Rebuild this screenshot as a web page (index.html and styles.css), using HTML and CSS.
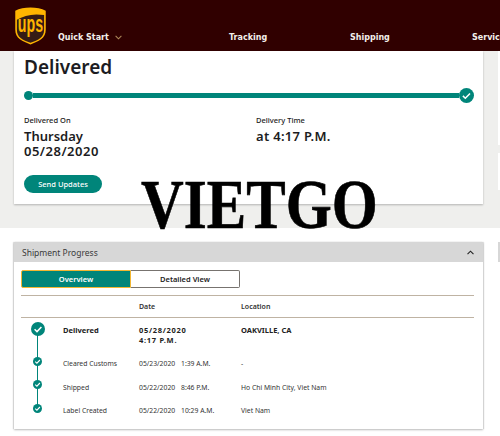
FILE: index.html
```html
<!DOCTYPE html>
<html lang="en">
<head>
    <meta charset="UTF-8">
    <meta name="viewport" content="width=device-width, initial-scale=1.0">
    <title>UPS Tracking</title>
    <link rel="stylesheet" href="styles.css">
</head>
<body>
    <header class="topbar">
        <svg class="logo" viewBox="0 0 34 40" width="33" height="38" preserveAspectRatio="none" aria-label="UPS">
            <path d="M17 .6C11 .6 5.6 1.700 1.300 4v20c0 4.300 1.700 7.600 4.800 10 2.900 2.300 7 3.900 10.900 5.400 3.900-1.500 8-3.100 10.900-5.400 3.100-2.400 4.800-5.700 4.800-10V4C28.400 1.700 23 .6 17 .6z" fill="#ffb500"/>
            <path d="M31 8.500V24.200c0 3.600-1.300 6.400-3.800 8.500-2.600 2.200-6.400 3.700-10.200 5-3.800-1.300-7.600-2.800-10.200-5C4.300 30.600 3 27.800 3 24.200V13.500C10 8.800 20 6.500 31 8.500z" fill="#351c15"/>
            <text class="logo-text" x="4" y="26" textLength="26" lengthAdjust="spacingAndGlyphs">ups</text>
        </svg>
        <nav class="nav">
            <a class="nav-item quick">Quick Start
                <svg class="chevron" viewBox="0 0 8 5" width="7" height="5"><path d="M.7.7 4 4 7.300.7" fill="none" stroke="#b08a5a" stroke-width="1.200"/></svg>
            </a>
            <a class="nav-item tracking">Tracking</a>
            <a class="nav-item shipping">Shipping</a>
            <a class="nav-item">Services</a>
        </nav>
    </header>

    <section class="top-area">
        <div class="status-card">
            <h1 class="status-title">Delivered</h1>
            <div class="track">
                <span class="track-dot"></span>
                <span class="track-line"></span>
                <svg class="track-check" viewBox="0 0 15 15" width="15" height="15">
                    <circle cx="7.500" cy="7.500" r="7.500" fill="#00857a"/>
                    <path d="M3.900 7.900 6.300 10.200 11 5.400" fill="none" stroke="#fff" stroke-width="1.500"/>
                </svg>
            </div>
            <div class="details">
                <div class="detail-col">
                    <div class="detail-label">Delivered On</div>
                    <div class="detail-value">Thursday<br><span class="nums">05/28/2020</span></div>
                </div>
                <div class="detail-col">
                    <div class="detail-label">Delivery Time</div>
                    <div class="detail-value nums-soft">at 4:17 P.M.</div>
                </div>
            </div>
            <button class="send-btn">Send Updates</button>
        </div>
        <div class="side-col">
            <div class="side-box side-a"></div>
            <div class="side-box side-b"></div>
        </div>
    </section>

    <section class="bottom-area">
        <div class="progress-card">
            <div class="progress-head">
                <span>Shipment Progress</span>
                <svg viewBox="0 0 8 5" width="7" height="5"><path d="M.6 4.300 4 1 7.400 4.300" fill="none" stroke="#222" stroke-width="1.300"/></svg>
            </div>
            <div class="progress-body">
                <div class="tabs">
                    <div class="tab tab-active">Overview</div>
                    <div class="tab">Detailed View</div>
                </div>
                <div class="row row-head">
                    <span></span><span></span><span>Date</span><span>Location</span>
                </div>
                <div class="row row-main">
                    <span class="marker marker-first">
                        <svg viewBox="0 0 14 14" width="14" height="14"><circle cx="7" cy="7" r="7" fill="#00857a"/><path d="M3.600 7.300 6 9.600 10.400 4.900" fill="none" stroke="#fff" stroke-width="1.500"/></svg>
                    </span>
                    <span>Delivered</span>
                    <span class="main-date">05/28/2020<br>4:17 P.M.</span>
                    <span>OAKVILLE, CA</span>
                </div>
                <div class="row row-event">
                    <span class="marker"><svg viewBox="0 0 9 9" width="9" height="9"><circle cx="4.500" cy="4.500" r="4.500" fill="#00857a"/><path d="M2.200 4.700 3.900 6.200 6.900 3" fill="none" stroke="#fff" stroke-width="1.100"/></svg></span>
                    <span>Cleared Customs</span>
                    <span><span class="ev-date">05/23/2020</span>1:39 A.M.</span>
                    <span>-</span>
                </div>
                <div class="row row-event">
                    <span class="marker"><svg viewBox="0 0 9 9" width="9" height="9"><circle cx="4.500" cy="4.500" r="4.500" fill="#00857a"/><path d="M2.200 4.700 3.900 6.200 6.900 3" fill="none" stroke="#fff" stroke-width="1.100"/></svg></span>
                    <span>Shipped</span>
                    <span><span class="ev-date">05/22/2020</span>8:46 P.M.</span>
                    <span>Ho Chi Minh City, Viet Nam</span>
                </div>
                <div class="row row-event">
                    <span class="marker marker-last"><svg viewBox="0 0 9 9" width="9" height="9"><circle cx="4.500" cy="4.500" r="4.500" fill="#00857a"/><path d="M2.200 4.700 3.900 6.200 6.900 3" fill="none" stroke="#fff" stroke-width="1.100"/></svg></span>
                    <span>Label Created</span>
                    <span><span class="ev-date">05/22/2020</span>10:29 A.M.</span>
                    <span>Viet Nam</span>
                </div>
            </div>
        </div>
        <div class="side-head"></div>
    </section>

    <div class="watermark">VIETGO</div>
</body>
</html>
```

FILE: styles.css
```css
html, body {
    margin: 0;
    height: 436px;
    overflow: hidden;
}
body {
    position: relative;
    width: 500px;
    background-color: #fff;
    font-family: "Noto Sans", "Open Sans", sans-serif;
    color: #222;
}

/* top bar */
.topbar {
    display: flex;
    height: 51px;
    padding-left: 14px;
    box-sizing: border-box;
    background-color: #300000;
    overflow: hidden;
}
.logo {
    flex: none;
    margin-top: 7px;
}
.logo-text {
    font-family: "Liberation Sans", sans-serif;
    font-size: 25px;
    font-weight: bold;
    fill: #ffb500;
}
.nav {
    display: flex;
    flex: none;
    margin-left: 11px;
    padding-top: 32px;
}
.nav-item {
    font-family: "DejaVu Sans", sans-serif;
    font-size: 8px;
    font-weight: bold;
    line-height: 12px;
    color: #f3efea;
    white-space: nowrap;
}
.quick { width: 171px; }
.tracking { width: 121px; }
.shipping { width: 122px; }
.chevron { margin-left: 3px; }

/* delivered card */
.top-area {
    display: flex;
    height: 177px;
    padding-left: 14px;
    background-color: #efefed;
    overflow: hidden;
}
.status-card {
    flex: none;
    width: 469px;
    height: 153px;
    padding: 5px 9px 0 10px;
    box-sizing: border-box;
    background-color: #fff;
    box-shadow: 0 1px 2px rgba(0, 0, 0, 0.25);
}
.status-title {
    margin: 0;
    font-size: 19px;
    font-weight: 600;
    line-height: 22px;
    color: #1c1c22;
}
.track {
    display: flex;
    align-items: center;
    height: 15px;
    margin-top: 10px;
}
.track-dot {
    flex: none;
    width: 9px;
    height: 9px;
    border-radius: 50%;
    background-color: #00857a;
}
.track-line {
    flex: 1;
    height: 5px;
    background-color: #00857a;
}
.track-check { flex: none; }
.details {
    display: flex;
    margin-top: 11px;
}
.detail-col {
    flex: none;
    width: 232px;
}
.detail-label {
    font-size: 7.500px;
    font-weight: 500;
    line-height: 12px;
}
.detail-value {
    margin-top: 3px;
    font-size: 13px;
    font-weight: 600;
    line-height: 15px;
    color: #1c1c22;
}
.nums { letter-spacing: 0.5px; }
.nums-soft { letter-spacing: 0.3px; }
.send-btn {
    display: block;
    width: 78px;
    height: 18px;
    margin-top: 16px;
    padding: 0;
    border: none;
    border-radius: 9px;
    background-color: #00857a;
    font-family: inherit;
    font-size: 7.500px;
    font-weight: 500;
    color: #fff;
}
.side-col {
    flex: none;
    width: 40px;
    margin-left: 15px;
}
.side-box { background-color: #fff; }
.side-a { height: 94px; }
.side-b {
    height: 37px;
    margin-top: 8px;
}

/* shipment progress */
.bottom-area {
    display: flex;
    padding: 14px 0 0 14px;
}
.progress-card {
    flex: none;
    width: 469px;
    height: 187px;
    box-sizing: border-box;
    background-color: #fff;
    box-shadow: 0 1px 2px rgba(0, 0, 0, 0.25), 1px 0 1px rgba(0, 0, 0, 0.1), -1px 0 1px rgba(0, 0, 0, 0.1);
}
.progress-head {
    display: flex;
    justify-content: space-between;
    align-items: center;
    height: 20px;
    padding: 0 9px 0 8px;
    background-color: #d7d7d7;
    font-size: 8.500px;
    color: #3a3a3a;
}
.progress-body { padding: 8px 9px 0 7px; }
.tabs {
    display: flex;
    width: 219px;
    height: 18px;
    margin-bottom: 7px;
}
.tab {
    flex: 1;
    border: 1px solid #77736f;
    border-left: none;
    border-radius: 0 2px 2px 0;
    font-size: 7.500px;
    font-weight: 600;
    line-height: 16px;
    text-align: center;
}
.tab-active {
    border: 1px solid #f2b632;
    border-radius: 2px 0 0 2px;
    background-color: #00857a;
    color: #fff;
}
.row {
    display: grid;
    grid-template-columns: 42px 76px 102px 1fr;
    font-size: 6.800px;
    color: #333;
}
.row-head {
    height: 23px;
    border-top: 1px solid #bfb3a3;
    border-bottom: 1px solid #bfb3a3;
    box-sizing: border-box;
    font-size: 7px;
    font-weight: 600;
    line-height: 21px;
}
.row-main {
    height: 33px;
    padding-top: 7px;
    box-sizing: border-box;
    font-size: 7.500px;
    font-weight: 700;
    line-height: 10px;
    color: #222;
}
.main-date { letter-spacing: 0.7px; }
.row-event {
    height: 23.700px;
    line-height: 26px;
}
.ev-date {
    display: inline-block;
    width: 42px;
}

/* timeline */
.marker {
    position: relative;
    display: flex;
    justify-content: center;
    align-items: flex-start;
    width: 33px;
}
.marker::before {
    content: "";
    position: absolute;
    top: 0;
    bottom: -1px;
    left: 16px;
    width: 1px;
    background-color: #00857a;
}
.marker svg {
    position: relative;
    margin-top: 5.500px;
}
.marker-first svg { margin-top: -3px; }
.marker-last::before { bottom: 12px; }

.side-head {
    flex: none;
    width: 40px;
    height: 20px;
    margin-left: 15px;
    background-color: #d7d7d7;
}

/* stamped over the shot */
.watermark {
    position: absolute;
    top: 165px;
    left: 141px;
    font-family: "Liberation Serif", serif;
    font-size: 70px;
    font-weight: bold;
    line-height: 80px;
    color: #000;
    -webkit-text-stroke: 0.6px #000;
    transform: scaleX(0.845);
    transform-origin: left top;
    white-space: nowrap;
}
```
